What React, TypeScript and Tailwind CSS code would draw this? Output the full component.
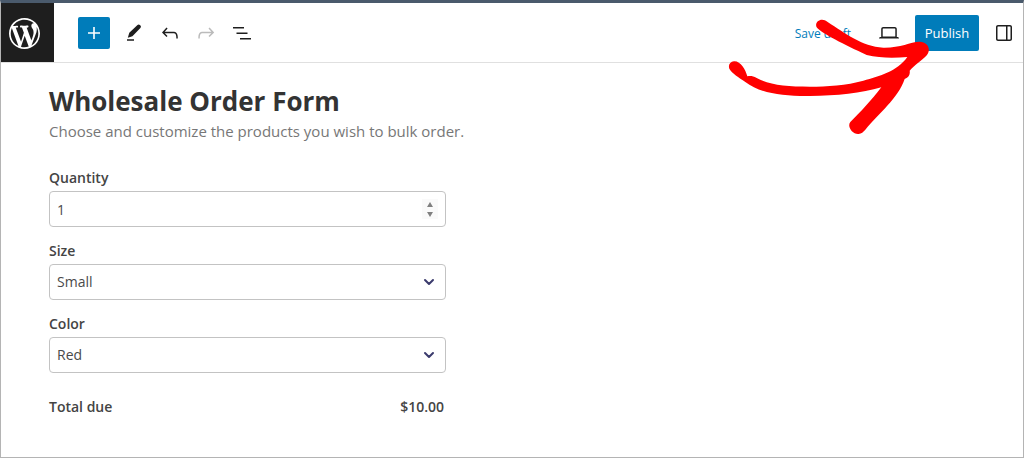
import React, { useState } from "react";
import { ChevronDown } from "lucide-react";

const icons = {
  wordpress:
    "M20 10c0-5.51-4.49-10-10-10C4.48 0 0 4.49 0 10c0 5.52 4.48 10 10 10 5.51 0 10-4.48 10-10zM7.78 15.37L4.37 6.22c.55-.02 1.17-.08 1.17-.08.5-.06.44-1.13-.06-1.11 0 0-1.45.11-2.37.11-.18 0-.37 0-.58-.01C4.12 2.69 6.87 1.11 10 1.11c2.33 0 4.45.87 6.05 2.34-.68-.11-1.65.39-1.65 1.58 0 .74.45 1.36.9 2.1.35.61.55 1.36.55 2.46 0 1.49-1.4 5-1.4 5l-3.03-8.37c.54-.02.82-.17.82-.17.5-.05.44-1.25-.06-1.22 0 0-1.44.12-2.38.12-.87 0-2.33-.12-2.33-.12-.5-.03-.56 1.2-.06 1.22l.92.08 1.26 3.41zM17.41 10c.24-.64.74-1.87.43-4.25.7 1.29 1.05 2.71 1.05 4.25 0 3.29-1.73 6.24-4.4 7.78.97-2.59 1.94-5.2 2.92-7.78zM6.1 18.09C3.12 16.65 1.11 13.53 1.11 10c0-1.3.23-2.48.72-3.59C3.25 10.3 4.67 14.2 6.1 18.09zm4.03-6.63l2.58 6.98c-.86.29-1.76.45-2.71.45-.79 0-1.57-.11-2.29-.33.81-2.38 1.62-4.74 2.42-7.1z",
  plus: "M18 11.2h-5.2V6h-1.6v5.2H6v1.6h5.2V18h1.6v-5.2H18z",
  edit: "M5.8 16.8 7.3 11.7 15.5 3.9C16.2 3.2 17.2 3.2 17.9 3.9L18.4 4.5C19.1 5.2 19.1 6.2 18.4 6.9L10.4 15.2zM5 18.2h7v1.6H5z",
  undo: "M18.3 11.7c-.6-.6-1.4-.9-2.3-.9H6.7l2.9-3.3-1.1-1-4.5 5L8.5 16l1-1-2.7-2.7H16c.5 0 .9.2 1.3.5 1 1 1 3.4 1 4.5v.3h1.5v-.2c0-1.5 0-4.3-1.5-5.7z",
  redo: "M15.6 6.5l-1.1 1 2.9 3.3H8c-.9 0-1.7.3-2.3.9-1.4 1.5-1.4 4.2-1.4 5.6v.2h1.5v-.3c0-1.1 0-3.5 1-4.5.3-.3.7-.5 1.3-.5h9.2L14.5 15l1.1 1.1 4.6-4.6-4.6-5z",
  list: "M3 6h11v1.5H3V6Zm3.5 5.5h11V13h-11v-1.5ZM21 17H10v1.5h11V17Z",
  desktop:
    "M20.5 16h-.7V8c0-1.1-.9-2-2-2H6.2c-1.1 0-2 .9-2 2v8h-.7c-.8 0-1.5.7-1.5 1.5h20c0-.8-.7-1.5-1.5-1.5zM5.7 8c0-.3.2-.5.5-.5h11.6c.3 0 .5.2.5.5v7.6H5.7V8z",
  sidebar:
    "M18 4H6c-1.1 0-2 .9-2 2v12c0 1.1.9 2 2 2h12c1.1 0 2-.9 2-2V6c0-1.1-.9-2-2-2zm-4 14.5H6c-.3 0-.5-.2-.5-.5V6c0-.3.2-.5.5-.5h8v13zm4.5-.5c0 .3-.2.5-.5.5h-2.5v-13H18c.3 0 .5.2.5.5v12z",
};

const Icon: React.FC<{ path: string }> = ({ path }) => (
  <svg viewBox="0 0 24 24" className="w-6 h-6" fill="currentColor" aria-hidden="true">
    <path d={path} />
  </svg>
);

const ToolButton: React.FC<{
  label: string;
  path: string;
  disabled?: boolean;
}> = ({ label, path, disabled }) => (
  <button
    type="button"
    aria-label={label}
    disabled={disabled}
    className="w-8 h-8 flex items-center justify-center text-[#1e1e1e] disabled:text-[#bbbbbb]"
  >
    <Icon path={path} />
  </button>
);

const SelectField: React.FC<{
  id: string;
  label: string;
  options: string[];
}> = ({ id, label, options }) => {
  const [value, setValue] = useState(options[0]);

  return (
    <div>
      <label htmlFor={id} className="block mb-[3px] leading-5 font-semibold">
        {label}
      </label>
      <div className="relative">
        <select
          id={id}
          value={value}
          onChange={(e) => setValue(e.target.value)}
          className="block w-full h-9 px-[7px] appearance-none bg-white border border-[#c3c3c3] rounded text-[#4a4a4a]"
        >
          {options.map((option) => (
            <option key={option}>{option}</option>
          ))}
        </select>
        <ChevronDown
          className="absolute right-[9px] top-2.5 w-4 h-4 text-[#3b3b6d] pointer-events-none"
          strokeWidth={3}
        />
      </div>
    </div>
  );
};

const OrderForm: React.FC = () => {
  const [quantity, setQuantity] = useState(1);

  return (
    <main className="px-12 pt-5 pb-10">
      <h1 className="text-[26px] leading-9 font-bold text-[#333333]">
        Wholesale Order Form
      </h1>
      <p className="text-[15px] leading-6 text-[#777777]">
        Choose and customize the products you wish to bulk order.
      </p>

      <form className="mt-[25px] w-full max-w-[397px] space-y-3.5 text-sm text-[#444444]">
        <div>
          <label htmlFor="quantity" className="block mb-[3px] leading-5 font-semibold">
            Quantity
          </label>
          <div className="relative">
            <input
              id="quantity"
              type="number"
              min={1}
              value={quantity}
              onChange={(e) => setQuantity(Number(e.target.value))}
              className="block w-full h-9 px-[7px] bg-white border border-[#c3c3c3] rounded text-[#4a4a4a] [appearance:textfield] [&::-webkit-inner-spin-button]:appearance-none"
            />
            <div className="absolute right-2 top-2 w-4 h-5 flex flex-col bg-[#fafafa] text-[#808080]">
              <button
                type="button"
                aria-label="Increase quantity"
                onClick={() => setQuantity(quantity + 1)}
                className="flex-1 flex items-center justify-center"
              >
                <svg viewBox="0 0 6 5" className="w-1.5 h-[5px]" fill="currentColor">
                  <path d="M3 0 6 5H0z" />
                </svg>
              </button>
              <button
                type="button"
                aria-label="Decrease quantity"
                onClick={() => setQuantity(Math.max(1, quantity - 1))}
                className="flex-1 flex items-center justify-center"
              >
                <svg viewBox="0 0 6 5" className="w-1.5 h-[5px]" fill="currentColor">
                  <path d="M0 0h6L3 5z" />
                </svg>
              </button>
            </div>
          </div>
        </div>

        <SelectField id="size" label="Size" options={["Small", "Medium", "Large"]} />
        <SelectField id="color" label="Color" options={["Red", "Green", "Blue"]} />

        <div className="flex justify-between pt-2.5 pr-0.5 leading-5 font-semibold">
          <span>Total due</span>
          <span>$10.00</span>
        </div>
      </form>
    </main>
  );
};

const App: React.FC = () => {
  return (
    <div className="relative min-h-screen bg-white border border-t-[3px] border-[#b4b4b4] border-t-[#4a5a6c] font-['Open_Sans',sans-serif]">
      {/* Editor toolbar */}
      <header className="h-[60px] flex items-center border-b border-[#e0e0e0]">
        <a
          href="#"
          aria-label="View posts"
          className="w-[53px] self-stretch flex items-center pt-0.5 pl-2 bg-[#1e1e1e] text-white"
        >
          <svg viewBox="0 0 20 20" className="w-[31px] h-[31px]" fill="currentColor">
            <path d={icons.wordpress} />
          </svg>
        </a>
        <button
          type="button"
          aria-label="Add block"
          className="w-8 h-8 ml-6 mr-2 flex items-center justify-center rounded-xs bg-[#007cba] text-white"
        >
          <Icon path={icons.plus} />
        </button>
        <div className="flex items-center gap-1">
          <ToolButton label="Edit" path={icons.edit} />
          <ToolButton label="Undo" path={icons.undo} />
          <ToolButton label="Redo" path={icons.redo} disabled />
          <ToolButton label="List view" path={icons.list} />
        </div>

        <div className="ml-auto mr-[3px] flex items-center">
          <button type="button" className="pt-0.5 mr-[22px] text-xs text-[#007cba]">
            Save draft
          </button>
          <ToolButton label="Preview" path={icons.desktop} />
          <button
            type="button"
            className="w-16 h-9 pt-0.5 ml-2.5 mr-[9px] rounded-xs bg-[#007cba] text-[13px] text-white"
          >
            Publish
          </button>
          <ToolButton label="Settings" path={icons.sidebar} />
        </div>
      </header>

      <OrderForm />

      {/* Hand-drawn arrow pointing at Publish */}
      <svg
        viewBox="0 0 912 420"
        className="absolute -top-[3px] -right-px w-[304px] h-[140px] pointer-events-none"
        fill="#ff0000"
        aria-hidden="true"
      >
        <path d="M42 184C30 185 24 196 28 206C36 220 56 232 76 246C120 280 190 289 270 288C350 288 425 279 484 262C455 300 420 338 391 366C380 380 398 404 416 402C424 401 430 396 436 389C475 341 535 295 554 237C567 232 571 222 569 212C585 193 605 181 619 167C636 148 622 124 598 125C570 126 540 144 490 143C425 139 376 100 323 66C304 50 282 66 290 82C304 100 375 135 440 165C480 175 525 174 562 171C530 215 480 228 430 242C380 256 320 260 270 260C200 260 150 256 110 234C98 227 90 227 82 229C76 208 62 183 42 184Z" />
      </svg>
    </div>
  );
};

export default App;
